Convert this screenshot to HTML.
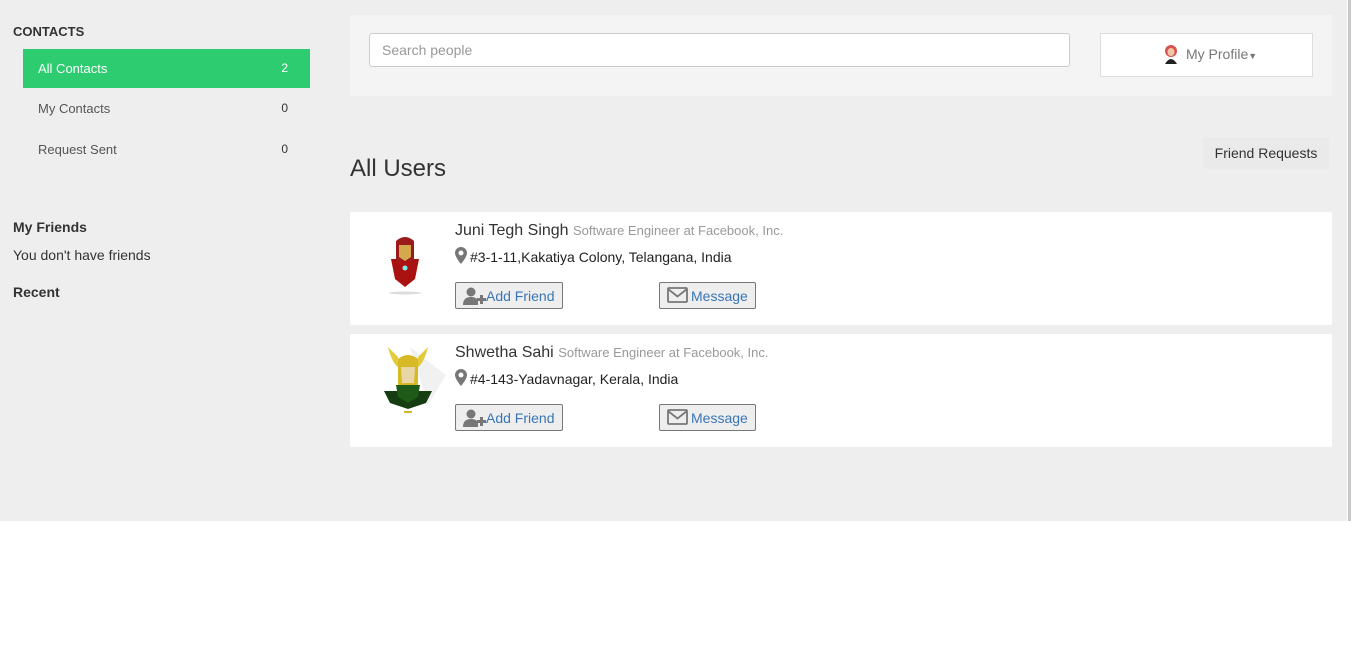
<!DOCTYPE html>
<html><head><style>
body{margin:0;width:1351px;height:672px;background:#fff;font-family:"Liberation Sans",sans-serif;position:relative;overflow:hidden}
#bg{position:absolute;left:0;top:0;width:1347px;height:521px;background:#eee}
#sb{position:absolute;left:1348px;top:0;width:3px;height:521px;background:#c8c8c8}
.a{position:absolute}
.nav{position:absolute;left:23px;width:287px;height:39px;font-size:13px;color:#555}
.nav span{position:absolute;left:15px;top:12px}
.nav b{position:absolute;right:22px;top:12px;font-weight:normal;font-size:12px;color:#333}
.card{position:absolute;left:350px;width:982px;height:113px;background:#fff;border-radius:2px}
.btn{position:absolute;height:27px;border:1px solid #777;background:#eee;border-radius:2px;font-size:14px;color:#3a75b5;box-sizing:border-box;line-height:26px}
.btn svg{position:absolute;top:4px}
</style></head><body>
<div id="bg"></div><div id="sb"></div>
<div class="a" style="left:13px;top:24px;font-size:13px;font-weight:bold;color:#333">CONTACTS</div>
<div class="nav" style="top:49px;background:#2ecc71;color:#fff"><span>All Contacts</span><b style="color:#fff">2</b></div>
<div class="nav" style="top:89px"><span>My Contacts</span><b>0</b></div>
<div class="nav" style="top:130px"><span>Request Sent</span><b>0</b></div>
<div class="a" style="left:13px;top:219px;font-size:14px;font-weight:bold;color:#333">My Friends</div>
<div class="a" style="left:13px;top:247px;font-size:14px;color:#333">You don't have friends</div>
<div class="a" style="left:13px;top:284px;font-size:14px;font-weight:bold;color:#333">Recent</div>

<div class="a" style="left:350px;top:15px;width:982px;height:81px;background:#f4f4f4"></div>
<div class="a" style="left:369px;top:33px;width:699px;height:32px;border:1px solid #ccc;border-radius:3px;background:#fff;font-size:14px;color:#999;line-height:32px;text-indent:12px">Search people</div>
<div class="a" style="left:1100px;top:33px;width:211px;height:42px;border:1px solid #ddd;background:#fff"></div>
<svg class="a" style="left:1163px;top:44px" width="16" height="22" viewBox="0 0 16 22"><ellipse cx="8" cy="7" rx="6" ry="6" fill="#d9534f"/><ellipse cx="8" cy="8" rx="3.5" ry="4" fill="#f1c6a6"/><path d="M2 20 Q8 10 14 20Z" fill="#222"/></svg>
<div class="a" style="left:1186px;top:46px;font-size:14px;color:#777">My Profile<span style="font-size:9px">▼</span></div>

<div class="a" style="left:350px;top:155px;font-size:24px;color:#333">All Users</div>
<div class="a" style="left:1203px;top:137px;width:126px;height:32px;background:#eaeaea;border-radius:3px;font-size:14px;color:#333;line-height:32px;text-align:center">Friend Requests</div>

<div class="card" style="top:212px"></div>
<div class="card" style="top:334px"></div>

<svg class="a" style="left:385px;top:235px" width="40" height="62" viewBox="0 0 40 62"><ellipse cx="20" cy="58" rx="16" ry="1.5" fill="#ddd"/><path d="M6 24 L34 24 L30 44 L20 52 L10 44Z" fill="#a11"/><path d="M11 6 Q20 -2 29 6 L29 26 L11 26Z" fill="#9b1a1a"/><path d="M14 10 L26 10 L26 22 L20 26 L14 22Z" fill="#d4a94e"/><circle cx="20" cy="33" r="2.5" fill="#7ee"/></svg>
<svg class="a" style="left:380px;top:345px" width="66" height="76" viewBox="0 0 66 76"><path d="M30 2 L66 30 L48 60Z" fill="#f1f1f1"/><path d="M8 2 Q12 18 18 22 L18 12Z M48 2 Q44 18 38 22 L38 12Z" fill="#e3c93c"/><path d="M18 14 Q28 6 38 14 L38 40 L18 40Z" fill="#d7b825"/><path d="M21 22 L35 22 L34 38 L22 38Z" fill="#e8d6a6"/><path d="M4 46 L52 46 L46 58 L28 64 L10 58Z" fill="#163d12"/><path d="M16 40 L40 40 L38 52 L28 58 L18 52Z" fill="#1f5a18"/><rect x="24" y="66" width="8" height="2" fill="#d7b825"/></svg>

<div class="a" style="left:455px;top:222px;font-size:16px;color:#333">Juni Tegh Singh <span style="font-size:13px;color:#999">Software Engineer at Facebook, Inc.</span></div>
<svg class="a" style="left:455px;top:247px" width="12" height="17" viewBox="0 0 12 17"><path d="M6 0 A6 6 0 0 0 0 6 C0 10 6 17 6 17 C6 17 12 10 12 6 A6 6 0 0 0 6 0Z M6 3.5 A2.5 2.5 0 1 1 6 8.5 A2.5 2.5 0 1 1 6 3.5Z" fill="#777" fill-rule="evenodd"/></svg>
<div class="a" style="left:470px;top:249px;font-size:14px;color:#222">#3-1-11,Kakatiya Colony, Telangana, India</div>
<div class="btn" style="left:455px;top:282px;width:108px;padding-left:30px"><svg style="left:7px" width="24" height="18" viewBox="0 0 24 18"><circle cx="8" cy="5" r="4.5" fill="#777"/><path d="M0 18 Q0 10 8 10 Q14 10 15 14 L15 18Z" fill="#777"/><path d="M17 8 h3 v3 h3 v3 h-3 v3 h-3 v-3 h-3 v-3 h3Z" fill="#777"/></svg>Add Friend</div>
<div class="btn" style="left:659px;top:282px;width:97px;padding-left:31px"><svg style="left:7px" width="21" height="16" viewBox="0 0 21 16"><rect x="1" y="1" width="19" height="14" rx="1" fill="none" stroke="#777" stroke-width="1.8"/><path d="M1 2 L10.5 9.5 L20 2" fill="none" stroke="#777" stroke-width="1.8"/></svg>Message</div>

<div class="a" style="left:455px;top:344px;font-size:16px;color:#333">Shwetha Sahi <span style="font-size:13px;color:#999">Software Engineer at Facebook, Inc.</span></div>
<svg class="a" style="left:455px;top:369px" width="12" height="17" viewBox="0 0 12 17"><path d="M6 0 A6 6 0 0 0 0 6 C0 10 6 17 6 17 C6 17 12 10 12 6 A6 6 0 0 0 6 0Z M6 3.5 A2.5 2.5 0 1 1 6 8.5 A2.5 2.5 0 1 1 6 3.5Z" fill="#777" fill-rule="evenodd"/></svg>
<div class="a" style="left:470px;top:371px;font-size:14px;color:#222">#4-143-Yadavnagar, Kerala, India</div>
<div class="btn" style="left:455px;top:404px;width:108px;padding-left:30px"><svg style="left:7px" width="24" height="18" viewBox="0 0 24 18"><circle cx="8" cy="5" r="4.5" fill="#777"/><path d="M0 18 Q0 10 8 10 Q14 10 15 14 L15 18Z" fill="#777"/><path d="M17 8 h3 v3 h3 v3 h-3 v3 h-3 v-3 h-3 v-3 h3Z" fill="#777"/></svg>Add Friend</div>
<div class="btn" style="left:659px;top:404px;width:97px;padding-left:31px"><svg style="left:7px" width="21" height="16" viewBox="0 0 21 16"><rect x="1" y="1" width="19" height="14" rx="1" fill="none" stroke="#777" stroke-width="1.8"/><path d="M1 2 L10.5 9.5 L20 2" fill="none" stroke="#777" stroke-width="1.8"/></svg>Message</div>
</body></html>
